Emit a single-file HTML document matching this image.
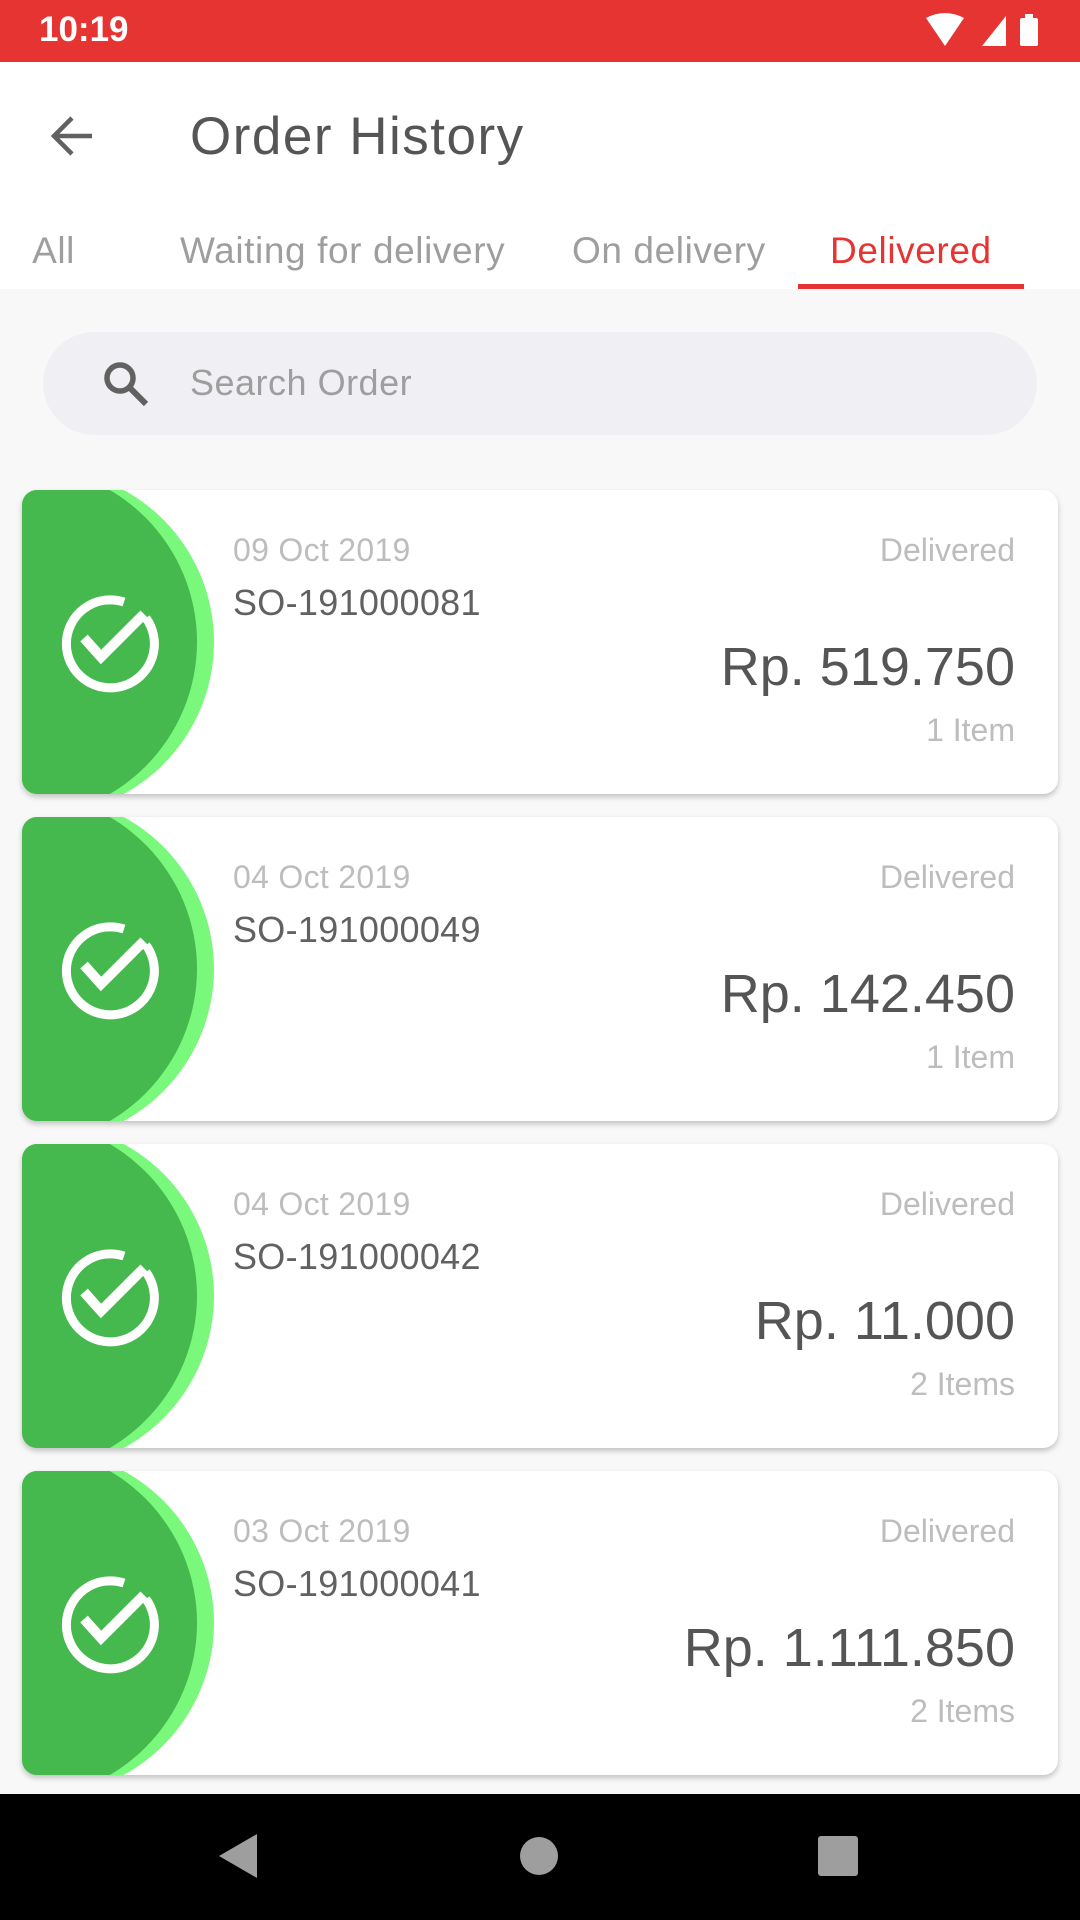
<!DOCTYPE html>
<html><head><meta charset="utf-8"><style>
*{margin:0;padding:0;box-sizing:border-box}
body{width:1080px;height:1920px;overflow:hidden;background:#f8f8f8;font-family:"Liberation Sans",sans-serif;position:relative}
.abs{position:absolute}
.status{left:0;top:0;width:1080px;height:62px;background:#e53431}
.header{left:0;top:62px;width:1080px;height:227px;background:#fff}
.tab{top:230px;font-size:37px;color:#9e9e9e;white-space:nowrap;letter-spacing:0.6px}
.card{left:22px;width:1036px;height:304px;background:#fff;border-radius:15px;overflow:hidden;box-shadow:0 3px 6px rgba(0,0,0,.22)}
.date{left:211px;top:42px;font-size:32px;color:#bdbdbd;letter-spacing:0.3px}
.so{left:211px;top:92px;font-size:36px;color:#616161;letter-spacing:0.3px}
.st{right:43px;top:42px;font-size:32px;color:#bdbdbd}
.price{right:43px;top:146px;font-size:54px;color:#555}
.items{right:43px;top:222px;font-size:32px;color:#bdbdbd}
</style></head><body>
<div class="abs status"></div>
<div class="abs" style="left:39px;top:10px;font-size:35px;color:#fff;font-weight:bold">10:19</div>
<svg class="abs" style="left:920px;top:12px" width="130" height="38" viewBox="0 0 130 38">
<path d="M6 6 Q25 -4 44 6 L25 34 Z" fill="#fff"/>
<path d="M86 4 L86 34 L62 34 Z" fill="#fff"/>
<rect x="100" y="6" width="18" height="28" rx="2" fill="#fff"/><rect x="105" y="2" width="8" height="5" fill="#fff"/>
</svg>
<div class="abs header"></div>
<svg class="abs" style="left:48px;top:112px" width="50" height="50" viewBox="0 0 50 50"><path d="M44 24 H8 M24 6 L6 24 L24 42" stroke="#616161" stroke-width="4.5" fill="none"/></svg>
<div class="abs" style="left:190px;top:106px;font-size:53px;color:#555;letter-spacing:1.5px">Order History</div>
<div class="abs tab" style="left:20px;width:55px;overflow:hidden;text-align:right">All</div>
<div class="abs tab" style="left:180px">Waiting for delivery</div>
<div class="abs tab" style="left:572px">On delivery</div>
<div class="abs tab" style="left:830px;color:#e53431">Delivered</div>
<div class="abs" style="left:798px;top:284px;width:226px;height:5px;background:#e53431"></div>
<div class="abs" style="left:43px;top:332px;width:994px;height:103px;border-radius:52px;background:#f0f0f4"></div>
<svg class="abs" style="left:100px;top:358px" width="52" height="52" viewBox="0 0 52 52"><circle cx="20" cy="20" r="13" stroke="#616161" stroke-width="5.5" fill="none"/><path d="M29 29 L46 46" stroke="#616161" stroke-width="6"/></svg>
<div class="abs" style="left:190px;top:362px;font-size:36px;color:#9e9e9e;letter-spacing:0.5px">Search Order</div>

<div class="abs card" style="top:490px">
<svg class="abs" style="left:0;top:0" width="230" height="304"><circle cx="19" cy="152" r="173" fill="#7af87c"/><circle cx="-1" cy="152" r="176" fill="#45b84e"/><path d="M124 128 A44 44 0 1 1 102 112" stroke="#fff" stroke-width="9" fill="none"/><path d="M62 148 L79 167 L122 124" stroke="#fff" stroke-width="10" fill="none"/></svg>
<div class="abs date">09 Oct 2019</div><div class="abs so">SO-191000081</div>
<div class="abs st">Delivered</div><div class="abs price">Rp. 519.750</div><div class="abs items">1 Item</div></div>

<div class="abs card" style="top:817px">
<svg class="abs" style="left:0;top:0" width="230" height="304"><circle cx="19" cy="152" r="173" fill="#7af87c"/><circle cx="-1" cy="152" r="176" fill="#45b84e"/><path d="M124 128 A44 44 0 1 1 102 112" stroke="#fff" stroke-width="9" fill="none"/><path d="M62 148 L79 167 L122 124" stroke="#fff" stroke-width="10" fill="none"/></svg>
<div class="abs date">04 Oct 2019</div><div class="abs so">SO-191000049</div>
<div class="abs st">Delivered</div><div class="abs price">Rp. 142.450</div><div class="abs items">1 Item</div></div>

<div class="abs card" style="top:1144px">
<svg class="abs" style="left:0;top:0" width="230" height="304"><circle cx="19" cy="152" r="173" fill="#7af87c"/><circle cx="-1" cy="152" r="176" fill="#45b84e"/><path d="M124 128 A44 44 0 1 1 102 112" stroke="#fff" stroke-width="9" fill="none"/><path d="M62 148 L79 167 L122 124" stroke="#fff" stroke-width="10" fill="none"/></svg>
<div class="abs date">04 Oct 2019</div><div class="abs so">SO-191000042</div>
<div class="abs st">Delivered</div><div class="abs price">Rp. 11.000</div><div class="abs items">2 Items</div></div>

<div class="abs card" style="top:1471px">
<svg class="abs" style="left:0;top:0" width="230" height="304"><circle cx="19" cy="152" r="173" fill="#7af87c"/><circle cx="-1" cy="152" r="176" fill="#45b84e"/><path d="M124 128 A44 44 0 1 1 102 112" stroke="#fff" stroke-width="9" fill="none"/><path d="M62 148 L79 167 L122 124" stroke="#fff" stroke-width="10" fill="none"/></svg>
<div class="abs date">03 Oct 2019</div><div class="abs so">SO-191000041</div>
<div class="abs st">Delivered</div><div class="abs price">Rp. 1.111.850</div><div class="abs items">2 Items</div></div>

<div class="abs" style="left:0;top:1794px;width:1080px;height:126px;background:#000"></div>
<svg class="abs" style="left:0;top:1794px" width="1080" height="126"><path d="M219 62 L257 40 L257 84 Z" fill="#9e9e9e"/><circle cx="539" cy="62" r="19" fill="#9e9e9e"/><rect x="818" y="42" width="40" height="40" rx="3" fill="#9e9e9e"/></svg>
</body></html>
